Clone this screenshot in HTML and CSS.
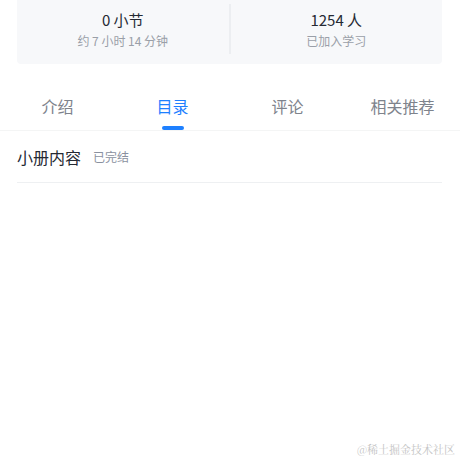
FILE: index.html
```html
<!DOCTYPE html>
<html lang="zh">
<head>
    <meta charset="UTF-8">
    <meta name="viewport" content="width=device-width, initial-scale=1.0">
    <title>小册</title>
    <link rel="stylesheet" href="styles.css">
</head>
<body>

<div class="stats">
    <div class="stat">
        <div class="stat-value">0 小节</div>
        <div class="stat-label">约 7 小时 14 分钟</div>
    </div>
    <div class="stat-divider"></div>
    <div class="stat">
        <div class="stat-value">1254 人</div>
        <div class="stat-label">已加入学习</div>
    </div>
</div>

<div class="tabs">
    <div class="tab"><span class="tab-text">介绍</span><span class="tab-bar"></span></div>
    <div class="tab active"><span class="tab-text">目录</span><span class="tab-bar"></span></div>
    <div class="tab"><span class="tab-text">评论</span><span class="tab-bar"></span></div>
    <div class="tab"><span class="tab-text">相关推荐</span><span class="tab-bar"></span></div>
</div>

<div class="section">
    <div class="section-head">
        <span class="section-title">小册内容</span>
        <span class="section-status">已完结</span>
    </div>
</div>

<div class="watermark">@稀土掘金技术社区</div>

</body>
</html>
```

FILE: styles.css
```css
body {
    font-family: "Noto Sans CJK SC", "Noto Sans", sans-serif;
    background-color: #fff;
    margin: 0;
    padding: 0;
    width: 460px;
    height: 460px;
    position: relative;
    overflow: hidden;
    color: #252933;
}

.stats {
    display: flex;
    margin: 0 18px 0 17px;
    height: 64px;
    background-color: #f7f8fa;
    border-radius: 0 0 4px 4px;
}

.stat {
    flex: 1;
    display: flex;
    flex-direction: column;
    align-items: center;
    padding-top: 8px;
}

.stat-value {
    font-size: 15px;
    line-height: 24px;
}

.stat-label {
    font-size: 12px;
    line-height: 18px;
    color: #9a9fa8;
}

.stat-divider {
    width: 2px;
    margin: 4px 0 10px;
    background-color: #eceef1;
}

.tabs {
    display: flex;
    height: 66px;
    border-bottom: 1px solid #f4f5f5;
}

.tab {
    flex: 1;
    display: flex;
    flex-direction: column;
    align-items: center;
    padding-top: 29px;
    box-sizing: border-box;
}

.tab-text {
    font-size: 16px;
    line-height: 26px;
    margin-bottom: 1px;
    color: #7e838c;
}

.tab-bar {
    width: 22px;
    height: 4px;
    margin-top: 6px;
    border-radius: 2px;
}

.tab.active .tab-text {
    color: #1e80ff;
}

.tab.active .tab-bar {
    background-color: #1e80ff;
}

.section {
    margin: 0 18px 0 17px;
}

.section-head {
    display: flex;
    align-items: center;
    height: 51px;
    border-bottom: 1px solid #eef0f2;
}

.section-title {
    font-size: 16px;
    color: #252933;
}

.section-status {
    font-size: 12px;
    color: #8a919f;
    margin-left: 12px;
}

.watermark {
    position: absolute;
    right: 5px;
    bottom: 3px;
    font-family: "Noto Serif CJK SC", "Liberation Serif", serif;
    font-size: 11px;
    color: #c4c4c4;
}
```
